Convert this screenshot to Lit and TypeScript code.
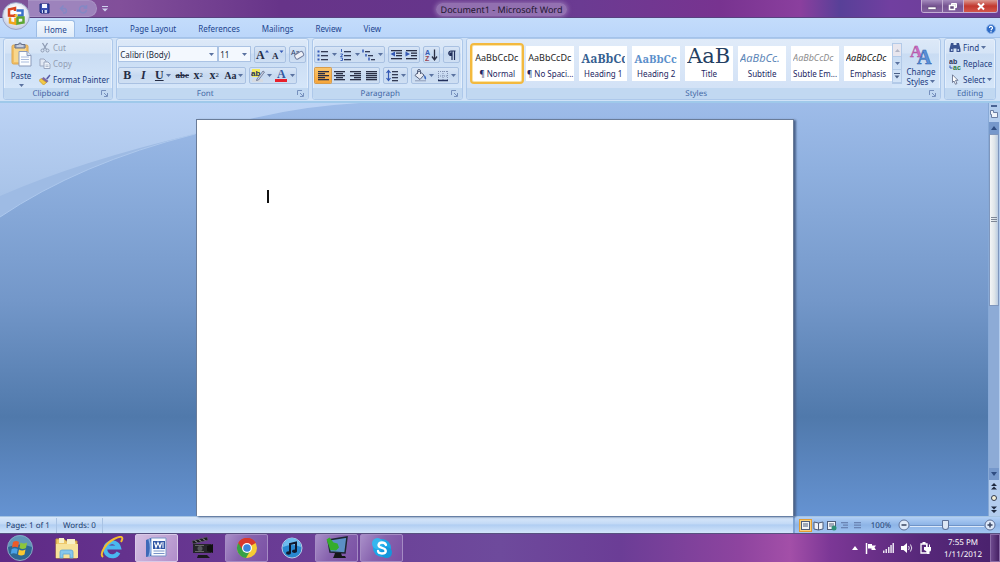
import { LitElement, html, css, svg, type TemplateResult } from "lit";
import { customElement, property } from "lit/decorators.js";
import { classMap } from "lit/directives/class-map.js";

const icon = (w: number, h: number, body: unknown, cls = "") =>
  html`<svg class="ic ${cls}" width=${w} height=${h} viewBox="0 0 ${w} ${h}" aria-hidden="true">${body}</svg>`;

const shared = css`
  * { box-sizing: border-box; }
  button { font: inherit; color: inherit; background: none; border: 0; padding: 0; margin: 0; display: flex; align-items: center; justify-content: center; white-space: nowrap; }
  .ic { display: block; flex: none; }
`;

const arrow = (c = "#5a72a0") => icon(5, 3, svg`<path d="M0 0h5L2.500 3z" fill=${c} />`);
const lines = (rows: number[][], c = "#333b55") =>
  rows.map(([x, y, w]) => svg`<rect x=${x} y=${y} width=${w} height="1.300" fill=${c} />`);

const align = (kind: string) => {
  const short = kind === "left" ? 1 : kind === "center" ? 3 : kind === "right" ? 5 : 1;
  const w = kind === "justify" ? 11 : 7;
  return icon(13, 12, lines([[1, 1, 11], [short, 3, w], [1, 5, 11], [short, 7, w], [1, 9, 11]], "#2a2f45"));
};

const icons = {
  save: icon(11, 11, svg`<path d="M1 1h9v9H2L1 9z" fill="#3a4fb0" stroke="#1d2c7d"/><rect x="3" y="1" width="5" height="4" fill="#f4f7ff"/><rect x="3" y="7" width="5" height="3" fill="#c9d3f0"/><rect x="4" y="7" width="1.500" height="3" fill="#1d2c7d"/>`),
  undo: icon(10, 10, svg`<path d="M2 4.500h4a2.500 2.500 0 0 1 0 4.500H4M4.500 1.500L1.500 4.500l3 3" fill="none" stroke="#8488c4" stroke-width="1.500"/>`),
  redo: icon(10, 10, svg`<path d="M8 3.500A3.500 3.500 0 1 0 8.500 6M8.500 1v3h-3" fill="none" stroke="#8488c4" stroke-width="1.500"/>`),
  more: icon(6, 6, svg`<path d="M0 .5h6" stroke="#cfd0ee"/><path d="M0 2.500h6L3 5.500z" fill="#cfd0ee"/>`),
  office: icon(20, 20, svg`
    <g fill="none" stroke-width="2.500"><path d="M9 5V2L3 3.500v6l6 .5V8" stroke="#d8441e"/><path d="M10.500 4.500h6v5h-5" stroke="#3b71c9"/><path d="M4 11.500v5l5.500 1.200V12" stroke="#f0a51c"/><path d="M11.500 11.500h6v5l-6 1z" stroke="#5ea733"/></g><circle cx="10" cy="9.500" r="1.500" fill="#f5c33a"/>`),
  paste: icon(21, 25, svg`
    <rect x="1" y="3" width="16" height="19" rx="1.500" fill="#f2c066" stroke="#dda850"/>
    <rect x="3" y="6" width="12" height="14" fill="#f8d78c"/><path d="M4 6V2.500h3.500a1.500 1.500 0 0 1 3 0H14V6z" fill="#a9b3c8" stroke="#65708a"/><path d="M6 4h6" stroke="#e8ecf5"/>
    <path d="M8 9.500h8l4 4V24H8z" fill="#fbfdff" stroke="#8b9bbb"/><path d="M16 9.500v4h4" fill="#d6e1f4" stroke="#8b9bbb"/><path d="M10 15h8M10 17.500h8M10 20h8" stroke="#a9bbdc"/>`),
  cut: icon(12, 11, svg`<path d="M3.500 1l4 6.500M8.500 1l-4 6.500" stroke="#8e9bb3" stroke-width="1.300"/><circle cx="3.500" cy="8.500" r="1.500" fill="none" stroke="#8e9bb3"/><circle cx="8.500" cy="8.500" r="1.500" fill="none" stroke="#8e9bb3"/>`),
  copy: icon(12, 11, svg`<path d="M1 1h4l2 2v5H1z" fill="#e2e9f4" stroke="#9ba7bf"/><path d="M5 4h4l2 2v4.500H5z" fill="#eef3fa" stroke="#9ba7bf"/><path d="M6.500 7h3M6.500 8.500h3" stroke="#b1bccf"/>`),
  painter: icon(12, 11, svg`<path d="M7 4.500L10.500.5l1 1L8.500 5.500z" fill="#5b5fa9"/><path d="M4.500 3l5 4-2 2-5-4z" fill="#7d6aa5"/><path d="M2 4.500l5.500 4L4.500 11 0 6.500z" fill="#f3ca48" stroke="#c2902a" stroke-width=".7"/>`),
  grow: icon(15, 13, svg`<text x="1" y="11" font-size="12" font-weight="700" font-family="Liberation Serif" fill="#242c44">A</text><path d="M10 4.500h4L12 2z" fill="#3459b5"/>`),
  shrink: icon(14, 13, svg`<text x="1" y="11" font-size="9" font-weight="700" font-family="Liberation Serif" fill="#242c44">A</text><path d="M8.500 2.500h4l-2 2.500z" fill="#3459b5"/>`),
  eraser: icon(15, 13, svg`<text x="1" y="7" font-size="7" font-family="Liberation Sans" fill="#2a3a66">Aa</text><rect x="5" y="5" width="9" height="5" rx="1.500" fill="#eef1f8" stroke="#707c9c" transform="rotate(-32 9 8)"/>`),
  bullets: icon(14, 12, svg`${lines([[5, 2, 7], [5, 6, 7], [5, 10, 7]])}${[1.500, 5.500, 9.500].map((y) => svg`<rect x="1.500" y=${y} width="2" height="2" fill="#3459b5"/>`)}`),
  numbers: icon(14, 12, svg`${lines([[5, 2, 7], [5, 6, 7], [5, 10, 7]])}<path d="M2.500 0v3M1.500 5h2v1l-2 1.500h2M1.500 9h2v2.500h-2" fill="none" stroke="#3459b5" stroke-width=".9"/>`),
  multi: icon(14, 12, svg`${lines([[3, 2, 5], [6, 6, 5], [9, 10, 4]])}<path d="M1 .5v3M4 5v2.500M7 8.500v3" stroke="#3459b5" stroke-width="1.500"/>`),
  outdent: icon(13, 12, svg`${lines([[1, 1, 11], [6, 3.500, 6], [6, 6, 6], [1, 9, 11]], "#2a2f45")}<path d="M5 2.500v5L.5 5z" fill="#3459b5"/>`),
  indent: icon(13, 12, svg`${lines([[1, 1, 11], [6, 3.500, 6], [6, 6, 6], [1, 9, 11]], "#2a2f45")}<path d="M.5 2.500v5L5 5z" fill="#3459b5"/>`),
  sort: icon(13, 14, svg`<text x="0" y="6.500" font-size="7" font-weight="700" font-family="Liberation Sans" fill="#3459b5">A</text><text x="0" y="13" font-size="7" font-weight="700" font-family="Liberation Sans" fill="#9a4550">Z</text><path d="M9.500 1.500v9M7 8.500l2.500 3.500L12 8.500" fill="none" stroke="#2a2f45" stroke-width="1.300"/>`),
  pilcrow: icon(9, 12, svg`<path d="M8.500 2H4a2.200 2.200 0 0 0 0 4.500h1M5 2v9M7.500 2v9" fill="none" stroke="#22305c" stroke-width="1.200"/><path d="M2 3.500h3v3H3z" fill="#22305c"/>`),
  spacing: icon(13, 13, svg`${lines([[6, 2, 6], [6, 5, 6], [6, 8, 6], [6, 11, 6]])}<path d="M2.500 2v9M.5 4l2-2.500 2 2.500M.5 9l2 2.500 2-2.500" fill="none" stroke="#3459b5" stroke-width="1.200"/>`),
  bucket: icon(13, 13, svg`<path d="M5 2l5 4-4 4.500-5-4z" fill="#e7ebf4" stroke="#56627f"/><path d="M3.500 5V2a1.500 1.500 0 0 1 3 0v3" fill="none" stroke="#56627f"/><path d="M10 6c2 1 2.500 3 2 4.500-1.500 0-2-2-2-4.500z" fill="#3b68c0"/><path d="M1 11.800h11" stroke="#8d9ab7"/>`),
  borders: icon(12, 12, svg`<path d="M1.500 1v10M6 1v10M10.500 1v10M1 1.500h10M1 6h10" fill="none" stroke="#8190b0" stroke-dasharray="1 1"/><path d="M1 10.500h10" stroke="#22305c" stroke-width="1.300"/>`),
  highlight: icon(14, 15, svg`<rect x="1" y="1" width="8" height="8" fill="#f4ea5d"/><rect x="1" y="11" width="11" height="3" fill="#d6dae0"/><text x="0" y="8" font-size="8" font-weight="700" font-family="Liberation Sans" fill="#22305c">ab</text><path d="M6 11l6-8 1.500 1-6 8-2 .5z" fill="#cbd3e6" stroke="#56627f" stroke-width=".7"/>`),
  fontColor: icon(13, 15, svg`<text x="2" y="10" font-size="12" font-weight="700" font-family="Liberation Serif" fill="#3459a0">A</text><rect x="0" y="11" width="12" height="3" fill="#e8202c"/>`),
  changeStyles: icon(24, 23, svg`<text x="1" y="14" font-size="17" font-weight="700" font-family="Liberation Serif" fill="#cf6cc0" stroke="#a14a9a" stroke-width=".4">A</text><text x="8" y="21" font-size="20" font-weight="700" font-family="Liberation Serif" fill="#5a90d8" stroke="#3165ad" stroke-width=".5">A</text>`),
  find: icon(12, 11, svg`<path d="M2 1h2.500v2H7.500V1H10l1.500 6v3H7.500V6.500h-3V10H.5V7z" fill="#3a5390"/><rect x="2" y="7" width="1.500" height="2" fill="#b8cbec"/><rect x="8.500" y="7" width="1.500" height="2" fill="#b8cbec"/>`),
  replace: icon(12, 12, svg`<text x="0" y="6" font-size="7" font-weight="700" font-family="Liberation Sans" fill="#2a3558">ab</text><text x="4" y="11.500" font-size="7" font-weight="700" font-family="Liberation Sans" fill="#2d7c3c">ac</text><path d="M1 7.500v2.500h2.500" fill="none" stroke="#3459b5"/>`),
  select: icon(12, 11, svg`<path d="M3.500.8l5.500 5.500H6.500L8 9.500l-1.500.8L5 7l-1.500 1.500z" fill="#fff" stroke="#5a6683" stroke-width=".8"/>`),
  launcher: icon(7, 7, svg`<path d="M.5 5V.5H5M3 3l3 3M6.500 3v3.500H3" fill="none" stroke="#7690bd"/>`),
};

@customElement("ribbon-group")
class RibbonGroup extends LitElement {
  @property() name = "";
  @property({ type: Boolean }) launcher = false;
  static styles = [shared, css`
    :host { display: flex; flex-direction: column; border: 1px solid #adc8ea; border-radius: 3px; overflow: hidden;
      background: linear-gradient(#dde9f8 0, #d5e4f6 14px, #c9dcf3 15px, #d9e9fb 100%); box-shadow: inset 0 0 0 1px #e5effb; }
    .body { flex: 1; display: flex; min-height: 49px; }
    .foot { display: flex; align-items: center; height: 11px; background: #c1d8f1; color: #4468a6; }
    .name { flex: 1; text-align: center; line-height: 11px; }
    .launch { width: 15px; height: 11px; }
  `];
  render() {
    return html`<div class="body"><slot></slot></div>
      <div class="foot"><span class="name">${this.name}</span>
      ${this.launcher ? html`<button class="launch" aria-label="${this.name} options">${icons.launcher}</button>` : ""}</div>`;
  }
}

interface Style { sample: string; name: string; cls: string }

@customElement("word-ribbon")
class WordRibbon extends LitElement {
  private gallery: Style[] = [
    { sample: "AaBbCcDc", name: "¶ Normal", cls: "plain" },
    { sample: "AaBbCcDc", name: "¶ No Spaci...", cls: "plain" },
    { sample: "AaBbCc", name: "Heading 1", cls: "h1" },
    { sample: "AaBbCc", name: "Heading 2", cls: "h2" },
    { sample: "AaB", name: "Title", cls: "title" },
    { sample: "AaBbCc.", name: "Subtitle", cls: "sub" },
    { sample: "AaBbCcDc", name: "Subtle Em...", cls: "subtle" },
    { sample: "AaBbCcDc", name: "Emphasis", cls: "em" },
  ];
  static styles = [shared, css`
    :host { display: block; color: #1c3b80; }
    .tabs { display: flex; height: 19px; padding: 2px 4px 0 36px; background: linear-gradient(#c3dcfb, #bbd6fa); align-items: stretch; }
    .tab { padding: 0 11px; min-width: 38px; color: #22458f; }
    .tab.on { padding: 0 7px; border: 1px solid #9dbde6; border-bottom: 0; border-radius: 3px 3px 0 0; background: linear-gradient(#f5fafe, #dfebf9); }
    .help { margin-left: auto; }
    .panel { display: flex; gap: 3px; padding: 0 4px 1px 3px; background: #d0e2f7; border-top: 1px solid #a4c3ea; border-bottom: 2px solid #9fc9ea; }
    .styles { flex: 1; }
    .paste { flex-direction: column; gap: 3px; width: 34px; padding-top: 1px; }
    .clip { flex: 1; display: flex; flex-direction: column; justify-content: center; gap: 4px; padding: 0 3px 0 1px; }
    .clip button, .edit button { justify-content: flex-start; gap: 2px; height: 12px; }
    .off { color: #929db3; }
    .rows { display: flex; flex-direction: column; gap: 4px; padding: 7px 2px 0 1px; }
    .row { display: flex; gap: 3px; }
    .set { display: flex; height: 17px; border: 1px solid #a9c1e2; border-radius: 2px; background: linear-gradient(#d8e5f6, #c6d9f0 50%, #cfdff3); color: #242c44; }
    .set button { min-width: 15px; gap: 2px; }
    .set.even button { min-width: 16px; }
    .set .drop, .set.even .drop { min-width: 23px; }
    .set .lit { background: linear-gradient(#fac56a, #f7a63a); box-shadow: 0 0 0 1px #d99c4a; border-radius: 1px; }
    .combo { position: relative; display: flex; align-items: center; height: 16px; background: #f3f8fe; border: 1px solid #abc3e4; }
    .combo + .combo { margin-left: -3px; }
    .combo select { appearance: none; border: 0; background: none; font: inherit; color: #222b40; width: 100%; height: 14px; padding: 0 10px 0 1px; margin: 0; }
    .combo .drop { position: absolute; right: 3px; pointer-events: none; }
    .wide { width: 100px; }
    .narrow { width: 33px; }
    .serif { font-family: "Liberation Serif", serif; font-weight: 700; font-size: 10px; }
    .big { font-size: 12px; }
    .ital { font-style: italic; }
    .under { text-decoration: underline; }
    .strike { text-decoration: line-through; font-size: 9px; }
    .small { font-size: 6px; }
    .set .tight { gap: 0; }
    .gallery { display: flex; gap: 5px; padding: 7px 0 7px 6px; flex: 1; background: linear-gradient(#e0ebf9, #d3e2f6); }
    .tile { flex: 1 1 0; min-width: 0; max-width: 48px; height: 35px; flex-direction: column; justify-content: flex-start; background: #fff; color: #22265f; overflow: hidden; }
    .tile.on { outline: 2px solid #f3b93f; outline-offset: 1px; border-radius: 1px; box-shadow: 0 0 0 1px #fbe4a5; }
    .sample { width: 44px; height: 22px; line-height: 24px; overflow: hidden; text-align: left; color: #262626; }
    .name { line-height: 12px; }
    .plain { font-size: 9px; }
    .h1 { font: 700 12px/25px "Noto Serif", "DejaVu Serif", serif; color: #365f91; }
    .h2 { font: 700 11px/25px "Noto Serif", "DejaVu Serif", serif; color: #5b8fcb; }
    .title { font: 21px/20px "DejaVu Serif", serif; color: #243f62; }
    .sub { font-size: 11px; font-style: italic; color: #5d86b8; }
    .subtle { font-size: 9px; font-style: italic; color: #8c8c8c; }
    .em { font-size: 9px; font-style: italic; color: #111; }
    .scroll { display: flex; flex-direction: column; width: 10px; margin: 4px 0 4px; border: 1px solid #b3cae8; }
    .scroll button { flex: 1; border-bottom: 1px solid #b3cae8; }
    .scroll button:first-child { background: #e8e6ee; }
    .change { flex-direction: column; width: 38px; line-height: 9px; gap: 1px; padding-top: 4px; justify-content: flex-start; }
    .change .line { display: flex; align-items: center; gap: 2px; }
    .edit { display: flex; flex-direction: column; justify-content: center; gap: 4px; width: 50px; padding: 0 0 0 4px; }
  `];

  private combo(label: string, value: string, cls: string) {
    return html`<label class="combo ${cls}"><select aria-label=${label}><option>${value}</option></select><span class="drop">${arrow()}</span></label>`;
  }
  private tool(label: string, body: unknown, drop = false, cls = "") {
    return html`<button class="${drop ? "drop" : ""} ${cls}" aria-label=${label}>${body}${drop ? arrow() : ""}</button>`;
  }

  render() {
    const t = this.tool.bind(this);
    return html`
      <nav class="tabs">
        ${["Home", "Insert", "Page Layout", "References", "Mailings", "Review", "View"].map(
          (n, i) => html`<button class=${classMap({ tab: true, on: i === 0 })}>${n}</button>`)}
        <button class="help" aria-label="Help">${icon(10, 10, svg`<circle cx="5" cy="5" r="4.500" fill="#2e6bc6" stroke="#8bb2e8"/><path d="M3.500 4a1.500 1.500 0 1 1 2 1.200L5 6.200" fill="none" stroke="#fff" stroke-width="1.200"/><circle cx="5" cy="7.700" r=".7" fill="#fff"/>`)}</button>
      </nav>
      <div class="panel">
        <ribbon-group name="Clipboard" launcher>
          <button class="paste">${icons.paste}<span>Paste</span>${arrow()}</button>
          <div class="clip">
            <button class="off">${icons.cut}Cut</button>
            <button class="off">${icons.copy}Copy</button>
            <button>${icons.painter}Format Painter</button>
          </div>
        </ribbon-group>
        <ribbon-group name="Font" launcher>
          <div class="rows">
            <div class="row">
              ${this.combo("Font", "Calibri (Body)", "wide")}${this.combo("Font size", "11", "narrow")}
              <div class="set">${t("Grow font", icons.grow)}${t("Shrink font", icons.shrink)}</div>
              <div class="set">${t("Clear formatting", icons.eraser)}</div>
            </div>
            <div class="row">
              <div class="set even">
                ${t("Bold", html`<span class="serif big">B</span>`)}${t("Italic", html`<span class="serif big ital">I</span>`)}
                ${t("Underline", html`<span class="serif big under">U</span>`, true)}${t("Strikethrough", html`<span class="serif strike">abc</span>`)}
                ${t("Subscript", html`<span class="serif big">x</span><sub class="small">2</sub>`, false, "tight")}${t("Superscript", html`<span class="serif big">x</span><sup class="small">2</sup>`, false, "tight")}
                ${t("Change case", html`<span class="serif">Aa</span>`, true)}
              </div>
              <div class="set">${t("Highlight", icons.highlight, true)}${t("Font color", icons.fontColor, true)}</div>
            </div>
          </div>
        </ribbon-group>
        <ribbon-group name="Paragraph" launcher>
          <div class="rows">
            <div class="row">
              <div class="set">${t("Bullets", icons.bullets, true)}${t("Numbering", icons.numbers, true)}${t("Multilevel list", icons.multi, true)}</div>
              <div class="set">${t("Decrease indent", icons.outdent)}${t("Increase indent", icons.indent)}</div>
              <div class="set">${t("Sort", icons.sort)}</div>
              <div class="set">${t("Show marks", icons.pilcrow)}</div>
            </div>
            <div class="row">
              <div class="set even">${t("Align left", align("left"), false, "lit")}${t("Center", align("center"))}${t("Align right", align("right"))}${t("Justify", align("justify"))}</div>
              <div class="set">${t("Line spacing", icons.spacing, true)}</div>
              <div class="set">${t("Shading", icons.bucket, true)}${t("Borders", icons.borders, true)}</div>
            </div>
          </div>
        </ribbon-group>
        <ribbon-group class="styles" name="Styles" launcher>
          <div class="gallery">
            ${this.gallery.map((s, i) => html`<button class=${classMap({ tile: true, on: i === 0 })}><span class="sample ${s.cls}">${s.sample}</span><span class="name">${s.name}</span></button>`)}
          </div>
          <div class="scroll">
            <button aria-label="Previous styles">${icon(5, 3, svg`<path d="M0 3h5L2.500 0z" fill="#b3b6c6"/>`)}</button>
            <button aria-label="Next styles">${arrow()}</button>
            <button aria-label="More styles">${icon(6, 6, svg`<path d="M0 .5h6" stroke="#4a5f86"/><path d="M.5 2.500h5L3 5.500z" fill="#4a5f86"/>`)}</button>
          </div>
          <button class="change">${icons.changeStyles}<span>Change</span><span class="line">Styles ${arrow()}</span></button>
        </ribbon-group>
        <ribbon-group name="Editing">
          <div class="edit">
            <button>${icons.find}Find ${arrow()}</button>
            <button>${icons.replace}Replace</button>
            <button>${icons.select}Select ${arrow()}</button>
          </div>
        </ribbon-group>
      </div>`;
  }
}

@customElement("task-bar")
class TaskBar extends LitElement {
  static styles = [shared, css`
    :host { display: flex; align-items: stretch; height: 29px; color: #fff; border-top: 1px solid #57517f;
      background: linear-gradient(90deg, #5f2a86 0, #693a94 25%, #6e4a9c 50%, #6b3d96 62%, #8e449f 74%, #a34fa8 79%, #7c3796 83%, #57287a 92%, #49216c 100%); }
    .start { width: 39px; margin-right: 6px; }
    .apps { display: flex; gap: 2px; flex: 1; }
    .app { width: 43px; border: 1px solid transparent; border-radius: 2px; }
    .open { border-color: #a58bc4; background: linear-gradient(120deg, #a98fc9, #8763ae 45%, #7a50a4); }
    .front { background: linear-gradient(120deg, #d3bfe2, #c3a8d6 50%, #b08dca); border-color: #d9c9e7; }
    .tray { display: flex; align-items: center; gap: 7px; }
    .clock { display: flex; flex-direction: column; align-items: center; line-height: 12px; padding-top: 3px; margin: 0 8px 0 13px; }
    .desk { width: 10px; border: 1px solid #8a6ba6; background: linear-gradient(90deg, #6e4a8e, #452063); }
  `];
  private apps: [string, string, TemplateResult][] = [
    ["Explorer", "", icon(26, 24, svg`<path d="M2 3h8l2 2h11v17H2z" fill="#eec86a" stroke="#c59a3d"/><path d="M5 2h5v5H5zM13 3h8v5h-8z" fill="#f8f1c8"/><path d="M2 8h22v14H2z" fill="#f7e29a"/><path d="M6 22v-6q0-2 2-2h9q2 0 2 2v6h-3v-4H9v4z" fill="#86c7ec" stroke="#5ea3d4" stroke-width=".8"/>`)],
    ["Internet Explorer", "", icon(24, 24, svg`<path d="M18.500 16.500A7 7 0 1 1 19 11.500H7" fill="none" stroke="#49b8f0" stroke-width="4"/><path d="M3 21C-1 18 6 7 14 3s10-2 7 3" fill="none" stroke="#f5bd2c" stroke-width="2"/>`)],
    ["Word", "open front", icon(24, 22, svg`<path d="M6 1h15v18H6z" fill="#fafcff" stroke="#7893c7"/><path d="M1 3l5-2v18l-5 1z" fill="#3d69b7"/><path d="M4 2q3 9 0 18" fill="none" stroke="#8cb0e8" stroke-width="1.500"/><rect x="8" y="4" width="12" height="8" fill="#3156a5"/><path d="M9.500 5.500l1.500 5 2-5 2 5 1.500-5M17 6h2M17 8h2M17 10h2" fill="none" stroke="#fff" stroke-width="1.200"/><path d="M8.500 14h11M8.500 16.500h11" stroke="#7893c7"/>`)],
    ["Movie Maker", "", icon(26, 24, svg`<path d="M3 5l15-4 1 3L4 8z" fill="#1d1c22" stroke="#5c5b60" stroke-width=".6"/><rect x="4" y="8" width="18" height="9" fill="#25252a"/><path d="M18 10l6-2v9l-6-2z" fill="#111"/><circle cx="11" cy="12.500" r="2.500" fill="#55565c"/><path d="M6 4.500l2 2M10 3.500l2 2M14 2.500l2 2" stroke="#bcbcc4"/><path d="M9 19h9l3 3H8z" fill="#19191c"/><path d="M6 9.500h9M6 15.500h9" stroke="#666"/>`)],
    ["Chrome", "open", icon(22, 22, svg`<circle cx="11" cy="11" r="10" fill="#f6cc35"/><path d="M11 11L2.300 6A10 10 0 0 1 19.700 6z" fill="#d8382c"/><path d="M11 11L2.300 6A10 10 0 0 0 10 21l4-7z" fill="#37a146"/><path d="M11 6h8.700A10 10 0 0 0 2.300 6L7 13.500z" fill="#d8382c"/><circle cx="11" cy="11" r="5" fill="#fff"/><circle cx="11" cy="11" r="3.800" fill="#3b84da"/>`)],
    ["iTunes", "", icon(24, 24, svg`<circle cx="12" cy="12" r="10" fill="#2988cf" stroke="#b7cbe5"/><path d="M3 11a9 9 0 0 1 18 0q-9-4-18 0z" fill="#6ebcee"/><path d="M10 17V8l6-1.500V15" fill="none" stroke="#10192d" stroke-width="2"/><ellipse cx="8.500" cy="17" rx="2.500" ry="1.800" fill="#10192d"/><ellipse cx="14.500" cy="15.300" rx="2.500" ry="1.800" fill="#10192d"/>`)],
    ["Remote Desktop", "open", icon(26, 24, svg`<path d="M4 4l19-3-2 16-15-1z" fill="#5b8fc6" stroke="#1e2533" stroke-width="1.500"/><path d="M11 17h6l1 3h3l1 2H9l1-2z" fill="#161719"/><path d="M2.500 3.500l3-2 4 5 4 1 1.500 4-3 3-6-.5-1-3.500z" fill="#35ad2c"/>`)],
    ["Skype", "open", icon(24, 24, svg`<circle cx="12" cy="12" r="9" fill="#1ba7e8"/><circle cx="7.500" cy="7.500" r="5.500" fill="#35b6ef"/><circle cx="16.500" cy="16.500" r="5.500" fill="#1597dc"/><path d="M16 9q-1-2.500-4-2.500T8.500 9q0 2 3.500 2.800T15.800 15q0 2.500-3.800 2.500T8 15" fill="none" stroke="#fff" stroke-width="2.300" stroke-linecap="round"/>`)],
  ];
  render() {
    return html`
      <button class="start" aria-label="Start">${icon(28, 28, svg`<circle cx="14" cy="14" r="12.500" fill="#2d6894" stroke="#8fa9c4"/><path d="M2 13a12 12 0 0 1 24 0q-12-5-24 0z" fill="#77a9c9" opacity=".7"/><path d="M7 8q3-2 6 0l-1 5.500q-3-1.500-6 0z" fill="#ec5b29"/><path d="M14.500 8.500q3 2 6.500 0L20 14q-3.500 2-6.500 0z" fill="#8dc63a"/><path d="M5.700 15q3-1.500 6 0l-1 5q-3-1.500-6 0z" fill="#4aa3e8"/><path d="M13 15.500q3 2 6.500 0l-1 5q-3.500 2-6.500 0z" fill="#fcc931"/>`)}</button>
      <div class="apps">${this.apps.map(([n, c, g]) => html`<button class="app ${c}" aria-label=${n}>${g}</button>`)}</div>
      <div class="tray">
        ${icon(6, 4, svg`<path d="M0 4h6L3 0z" fill="#fff"/>`)}
        ${icon(11, 12, svg`<path d="M1.500 1v11" stroke="#fff" stroke-width="1.500"/><path d="M3 2h4v1.500h4L9.500 5.500 11 8H6.500V6.500H3z" fill="#fff"/>`)}
        ${icon(11, 10, svg`<path d="M0 7.500h1.500V10H0zM2.500 6H4v4H2.500zM5 4h1.500v6H5zM7.300 2h1.500v8H7.300zM9.500 0H11v10H9.500z" fill="#e9e2f0"/>`)}
        ${icon(12, 12, svg`<path d="M0 4h2.500L6 1v10L2.500 8H0z" fill="#fff"/><path d="M7.500 4q1.500 2 0 4M9.500 2.500q2.500 3.500 0 7" fill="none" stroke="#e4dcec"/>`)}
        ${icon(11, 12, svg`<path d="M1 2h6v9H1z" fill="none" stroke="#fff" stroke-width="1.300"/><path d="M2.500 0h3v2h-3zM4 5h7v3q0 1.500-1.500 1.500V12H7V9.500L4 8zM6 2.500h1V5H6zM9 2.500h1V5H9z" fill="#fff"/>`)}
      </div>
      <div class="clock"><span>7:55 PM</span><span>1/11/2012</span></div>
      <button class="desk" aria-label="Show desktop"></button>`;
  }
}

@customElement("app-root")
class AppRoot extends LitElement {
  static styles = [shared, css`
    :host { display: flex; flex-direction: column; height: 100vh; overflow: hidden; font: 8px/11px "Noto Sans", "Open Sans", sans-serif; text-rendering: geometricPrecision; position: relative; }
    .bar { display: flex; height: 18px; align-items: flex-start; border-bottom: 1px solid #58417f;
      background: linear-gradient(90deg, #7c5399 0, #824f9a 12%, #673489 28%, #66358b 44%, #6b3b92 58%, #783390 72%, #8b3f9e 80%, #584098 84%, #713fa0 89%, #6b3f94 100%); }
    .quick { display: flex; align-items: center; gap: 9px; height: 17px; margin-left: 28px; padding: 0 8px 0 11px; border-radius: 0 9px 9px 0; background: #9d83bc; border: 1px solid #a892c4; border-left: 0; }
    .more { height: 17px; margin-left: 5px; }
    .caption { flex: 1; text-align: center; font-size: 9px; line-height: 20px; color: #20152d; padding-right: 26px; }
    .caption span { padding: 0 5px; border-radius: 8px; background: #a58abfb0; box-shadow: 0 0 4px 1px #a58abfb0; }
    .controls { display: flex; height: 13px; margin-right: 2px; border: 1px solid #c3aed3; border-top: 0; border-radius: 0 0 3px 3px; overflow: hidden; }
    .ctl { width: 21px; background: linear-gradient(#a58bbd, #755390 50%, #83619f); border-right: 1px solid #c3aed3; }
    .close { width: 33px; border: 0; background: linear-gradient(#dc9a92, #c2392f 50%, #d4574a); }
    .orb { position: absolute; left: 2px; top: 2px; width: 28px; height: 28px; border-radius: 50%; z-index: 2; border: 1px solid #9aa4c6; background: radial-gradient(circle at 50% 40%, #fdfdff 30%, #d3d9ea 65%, #aab5d3); }
    .work { flex: 1; min-height: 0; display: flex; position: relative; background: linear-gradient(#9ebce9 0, #8fb0df 16%, #7397c9 48%, #5079ab 76%, #5b86bf 88%, #6593d2 100%); }
    .swoosh { position: absolute; left: 0; top: 0; pointer-events: none; }
    .desk { flex: 1; min-width: 0; display: flex; justify-content: center; padding: 16px 0 0 2px; position: relative; }
    .page { width: 100%; max-width: 598px; background: #fff; border: 1px solid #6a7c98; border-bottom: 0; padding: 70px; box-shadow: 2px 1px 2px #4a628a; outline: 0; }
    .caret { display: block; width: 2px; height: 13px; background: #111; }
    .side { width: 12px; display: flex; flex-direction: column; background: #b4cdee; border-left: 1px solid #87a9d6; padding-right: 1px; }
    .side button { height: 12px; flex: none; }
    .split { height: 2px; margin: 2px 2px 1px; background: #4a6394; }
    .ruler { margin-bottom: 2px; }
    .track { flex: 1; display: flex; flex-direction: column; background: #8dabd6; }
    .thumb { flex: 0 1 172px; display: flex; align-items: center; justify-content: center; border: 1px solid #7e96bd; background: linear-gradient(90deg, #f3f5f6, #dfe5e9 55%, #b9cbe0); }
    .dark { background: #7698cb; }
    .space { flex: 1; }
    .status { display: flex; height: 17px; align-items: center; color: #203a6d; border-top: 1px solid #a6c4e2; background: linear-gradient(#d9e8fa, #c5dbf6 40%, #b1cef2 50%, #d3e5fb); }
    .cell { padding: 0 6px; line-height: 15px; border-right: 1px solid #a9c3e4; }
    .views { display: flex; margin-left: auto; align-items: center; align-self: stretch; padding: 0 4px; background: linear-gradient(#b2d0f6, #8db4e6 50%, #a3c6f2); border-left: 2px solid #7ea3d3; }
    .view { width: 13px; height: 13px; }
    .view.on { background: #fbd27c; box-shadow: inset 0 0 0 1px #e09d35; }
    .pct { width: 34px; text-align: center; }
    .range { appearance: none; width: 74px; height: 13px; margin: 0; background: linear-gradient(#0000 6px, #6f94c8 6px, #6f94c8 7px, #dce9fa 7px, #dce9fa 8px, #0000 8px); }
    .range::-webkit-slider-thumb { appearance: none; width: 7px; height: 10px; border: 1px solid #5d7097; border-radius: 1px 1px 4px 4px; background: #dde7f5; }
  `];

  private round(sign: string) {
    return icon(12, 12, svg`<circle cx="6" cy="6" r="5" fill="#dfeafa" stroke="#5d7097"/><path d=${sign} stroke="#3a4661" stroke-width="1.500"/>`);
  }
  private nav(label: string, d: string) {
    return html`<button aria-label=${label}>${icon(8, 8, svg`<path d=${d} fill="#1f2a40"/>`)}</button>`;
  }

  render() {
    const viewIcon = (i: number) => {
      const c = i < 3 ? "#4f5c78" : "#6a84b4";
      return icon(11, 11, i === 1
        ? svg`<path d="M1 2l4.500 1L10 2v7L5.500 10 1 9zM5.500 3v7" fill="#eef2f8" stroke=${c}/>`
        : i > 2
        ? svg`${lines([[2, 2, 7], [i === 3 ? 4 : 2, 4.500, i === 3 ? 5 : 7], [2, 7, 7]], c)}`
        : svg`<rect x="1.500" y="1.500" width="8" height="8" fill="#f3f5f8" stroke=${c}/><path d="M3 4h5M3 6h5" stroke=${c}/>${i === 2 ? svg`<circle cx="8" cy="8" r="2.500" fill="#2f8f78"/>` : ""}`);
    };
    return html`
      <header class="bar">
        <div class="quick">
          <button aria-label="Save">${icons.save}</button><button aria-label="Undo">${icons.undo}</button><button aria-label="Redo">${icons.redo}</button>
        </div>
        <button class="more" aria-label="Customize toolbar">${icons.more}</button>
        <div class="caption"><span>Document1 - Microsoft Word</span></div>
        <div class="controls">
          <button class="ctl" aria-label="Minimize">${icon(10, 9, svg`<rect x="1" y="5" width="8" height="2.500" fill="#fff" stroke="#5d4a70" stroke-width=".6"/>`)}</button>
          <button class="ctl" aria-label="Restore">${icon(10, 9, svg`<path d="M3.500 1.500h5v4h-2v-2h-3z" fill="#ddd" stroke="#fff"/><rect x="1.500" y="3.500" width="5" height="4" fill="#67507e" stroke="#fff" stroke-width="1.500"/>`)}</button>
          <button class="ctl close" aria-label="Close">${icon(10, 9, svg`<path d="M2 1.500l6 6M8 1.500l-6 6" stroke="#fff" stroke-width="2"/>`)}</button>
        </div>
      </header>
      <button class="orb" aria-label="Office menu">${icons.office}</button>
      <word-ribbon></word-ribbon>
      <main class="work">
        <svg class="swoosh" width="400" height="120" viewBox="0 0 400 120" aria-hidden="true">
          <defs><linearGradient id="g" x1="0" y1="0" x2="0" y2="1"><stop offset="0" stop-color="#bcd3f5"/><stop offset="1" stop-color="#a8c3e8"/></linearGradient></defs>
          <path d="M0 0H360Q280 4 195 31Q80 60 0 114z" fill="#9ebbe4"/>
          <path d="M0 0H360Q280 4 195 31Q80 58 0 93z" fill="url(#g)"/>
          <path d="M195 31Q80 60 0 114" fill="none" stroke="#adc8ed"/>
        </svg>
        <div class="desk"><div class="page" role="textbox" aria-label="Document" aria-multiline="true" tabindex="0"><span class="caret"></span></div></div>
        <div class="side">
          <div class="split"></div>
          <button class="ruler" aria-label="View ruler">${icon(10, 10, svg`<path d="M1.500 1.500h3v2h4v5h-6v-3h-1z" fill="#eef2f9" stroke="#6a7da3"/>`)}</button>
          <button class="dark" aria-label="Scroll up">${icon(6, 4, svg`<path d="M0 4h6L3 0z" fill="#2f4d82"/>`)}</button>
          <div class="track"><div class="thumb">${icon(6, 6, svg`<path d="M0 .5h6M0 2.500h6M0 4.500h6" stroke="#7e8796"/>`)}</div><div class="space"></div></div>
          <button class="dark" aria-label="Scroll down">${icon(6, 4, svg`<path d="M0 0h6L3 4z" fill="#2f4d82"/>`)}</button>
          ${this.nav("Previous page", "M1 4l3-3 3 3zM1 7.500l3-3 3 3z")}
          <button aria-label="Browse object">${icon(8, 8, svg`<circle cx="4" cy="4" r="2.500" fill="#f4f0d8" stroke="#333c50"/>`)}</button>
          ${this.nav("Next page", "M1 .5h6L4 3.500zM1 4h6L4 7z")}
        </div>
      </main>
      <footer class="status">
        <span class="cell">Page: 1 of 1</span><span class="cell">Words: 0</span>
        <div class="views">
          ${["Print layout", "Full screen reading", "Web layout", "Outline", "Draft"].map((n, i) => html`<button class=${classMap({ view: true, on: i === 0 })} aria-label=${n}>${viewIcon(i)}</button>`)}
          <span class="pct">100%</span>
          <button aria-label="Zoom out">${this.round("M3.500 6h5")}</button>
          <input class="range" type="range" aria-label="Zoom" min="0" max="200" value="95">
          <button aria-label="Zoom in">${this.round("M3.500 6h5M6 3.500v5")}</button>
        </div>
      </footer>
      <task-bar></task-bar>`;
  }
}
